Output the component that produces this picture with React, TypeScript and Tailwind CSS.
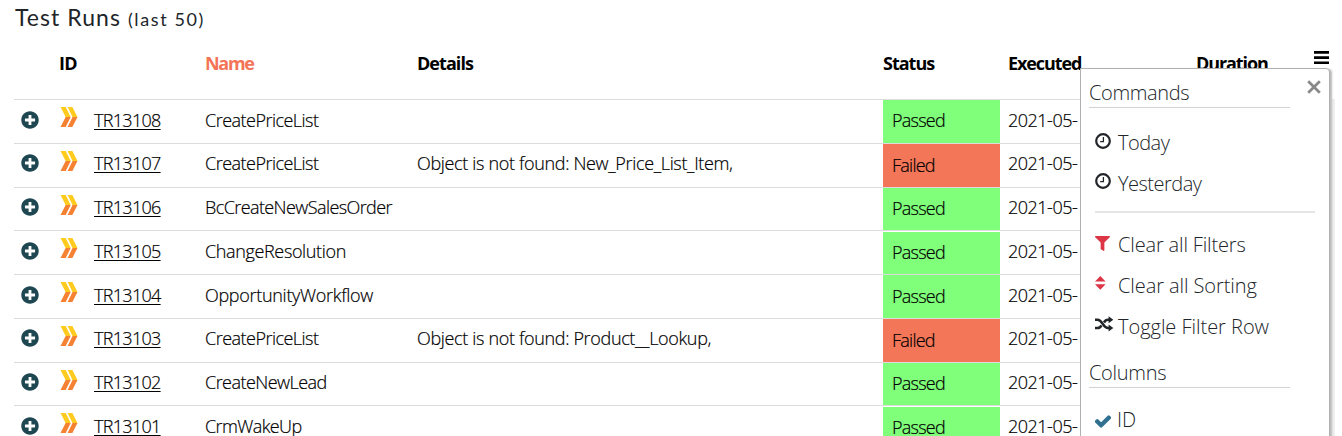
import { FaFilter, FaCheck, FaPlusCircle } from "react-icons/fa";

type Run = {
  id: string;
  name: string;
  details?: string;
  status: "Passed" | "Failed";
  row: string;
  icon: string;
  text: string;
  cell: string;
  tracking: string;
};

const tall = { row: "h-[44px]", icon: "pt-[11px]", text: "pt-[6px]", cell: "mt-0 pt-[7px]" };
const even = { row: "h-[44px]", icon: "pt-[10px]", text: "pt-[5px]", cell: "mt-0 pt-[7px]" };
const short = { row: "h-[43px]", icon: "pt-[10px]", text: "pt-[5px]", cell: "mt-0 pt-[6px]" };
const offset = { row: "h-[44px]", icon: "pt-[11px]", text: "pt-[6px]", cell: "mt-px pt-[6px]" };

const runs: Run[] = [
  { id: "TR13108", name: "CreatePriceList", status: "Passed", tracking: "tracking-[-0.52px]", ...tall, cell: "mt-0 pt-[6px]" },
  { id: "TR13107", name: "CreatePriceList", details: "Object is not found: New_Price_List_Item,", status: "Failed", tracking: "tracking-[-0.52px]", ...even },
  { id: "TR13106", name: "BcCreateNewSalesOrder", status: "Passed", tracking: "tracking-[-0.59px]", ...short },
  { id: "TR13105", name: "ChangeResolution", status: "Passed", tracking: "tracking-[-0.36px]", ...offset },
  { id: "TR13104", name: "OpportunityWorkflow", status: "Passed", tracking: "tracking-[-0.3px]", ...tall },
  { id: "TR13103", name: "CreatePriceList", details: "Object is not found: Product__Lookup,", status: "Failed", tracking: "tracking-[-0.52px]", ...even },
  { id: "TR13102", name: "CreateNewLead", status: "Passed", tracking: "tracking-[-0.54px]", ...short },
  { id: "TR13101", name: "CrmWakeUp", status: "Passed", tracking: "tracking-[-0.6px]", ...offset },
];

const columns = "grid grid-cols-[45px_35px_111px_212px_466px_125px_1fr]";

function RunIcon() {
  return (
    <svg className="ml-[1px] mt-[7px] h-[20px] w-[18px]" viewBox="0 0 18 20">
      <path d="M.5 0h5.2l5 10H5.6zM7.6 0h4.8l5.1 10h-5z" fill="#ffcb1f" />
      <path d="M5.6 10h5.1L5.7 20H.5zM12.5 10h5L12.4 20H7.6z" fill="#f58233" />
    </svg>
  );
}

function ClockIcon() {
  return (
    <svg className="h-[16px] w-[16px]" viewBox="0 0 16 16" fill="none" stroke="#212529">
      <circle cx="8" cy="8" r="6.8" strokeWidth="2.2" />
      <path d="M8.4 4v4.7H5.2" strokeWidth="1.3" />
    </svg>
  );
}

function SortIcon() {
  return (
    <svg className="h-[14px] w-[11px]" viewBox="0 0 11 14" fill="#dc3545">
      <path d="M5.3 0L10.6 5.6H0zM0 8.2h10.6L5.3 13.8z" />
    </svg>
  );
}

function ShuffleIcon() {
  return (
    <svg className="h-[16px] w-[19px]" viewBox="0 0 19 16" fill="none" stroke="#212529" strokeWidth="2.5">
      <path d="M0 3.8h2.5C8 3.8 7.500 12 13 12h2" />
      <path d="M0 12h2.500c1.900 0 3.100-1 4-2.700M9 6.500c1-1.700 2.200-2.700 4-2.700h2" />
      <path d="M13.6.3l4.700 3.500-4.700 3.500zM13.6 8.500l4.700 3.500-4.700 3.500z" fill="#212529" stroke="none" />
    </svg>
  );
}

function Commands() {
  return (
    <div className="absolute left-[1080px] top-[68px] h-[380px] w-[250px] rounded-tr-[4px] border border-[#b0b0b0] bg-white text-[20px] font-light leading-[28px] text-[#212529] shadow-[2px_1px_2px_#bbb]">
      <svg className="absolute left-[226px] top-[11px] h-[14px] w-[14px]" viewBox="0 0 14 14">
        <path d="M1.2 1.2l11.6 11.6M12.8 1.2L1.2 12.8" stroke="#888" strokeWidth="2.7" />
      </svg>
      <div className="ml-[8px] mt-[10px] h-[29px] w-[201px] border-b border-[#d3d3d3] tracking-[-0.35px]">Commands</div>
      <div className="mt-[21px] flex h-[41px] pl-[14px]">
        <span className="mt-[4px] w-[23px]"><ClockIcon /></span>
        <span className="tracking-[-0.5px]">Today</span>
      </div>
      <div className="flex h-[41px] pl-[14px]">
        <span className="mt-[3px] w-[23px]"><ClockIcon /></span>
        <span className="tracking-[-0.5px]">Yesterday</span>
      </div>
      <div className="ml-[14px] h-[2px] w-[220px] bg-[#e5e5e5]" />
      <div className="mt-[18px] flex h-[41px] pl-[14px]">
        <span className="mt-[5px] w-[23px]"><FaFilter className="h-[15px] w-[15px] text-[#dc3545]" /></span>
        <span className="tracking-[-0.15px]">Clear all Filters</span>
      </div>
      <div className="flex h-[41px] pl-[14px]">
        <span className="mt-[4px] w-[23px]"><SortIcon /></span>
        <span className="tracking-[-0.08px]">Clear all Sorting</span>
      </div>
      <div className="flex h-[40px] pl-[14px]">
        <span className="mt-[3px] w-[23px]"><ShuffleIcon /></span>
        <span className="tracking-[-0.03px]">Toggle Filter Row</span>
      </div>
      <div className="ml-[8px] mt-[6px] h-[29px] w-[201px] border-b border-[#d3d3d3] tracking-[-0.3px]">Columns</div>
      <div className="mt-[18px] flex pl-[14px]">
        <span className="mt-[8px] w-[22px]"><FaCheck className="h-[15px] w-[16px] stroke-[#2f6f8f] stroke-[45px] text-[#2f6f8f]" /></span>
        <span>ID</span>
      </div>
    </div>
  );
}

export default function App() {
  return (
    <main className="relative h-[436px] w-[1342px] overflow-hidden bg-white font-['Open_Sans','Noto_Sans',sans-serif] text-[18px] leading-[28px] text-black">
      <h1 className="h-[45px] pl-[15px] pt-[3px] font-['Lato',sans-serif] text-[23px] tracking-[1.05px] text-[#212529]">
        Test Runs <small className="text-[18px] tracking-[1.6px]">(last 50)</small>
      </h1>
      <section className="ml-[14px] w-[1321px]">
        <div className={`${columns} h-[54px] pt-[4px] font-bold tracking-[-0.7px]`}>
          <span className="col-span-2 pl-[45px]">ID</span>
          <span />
          <span className="text-[#f47458] tracking-[-1.3px]">Name</span>
          <span className="tracking-[-0.95px]">Details</span>
          <span className="tracking-[-1px]">Status</span>
          <span className="flex">
            <span className="w-[188px] tracking-[-1.1px]">Executed</span>
            <span className="w-[118px] tracking-[-1.1px]">Duration</span>
            <svg className="mt-px h-[15px] w-[15px]" viewBox="0 0 15 15">
              <path d="M0 2.4h15M0 7.6h15M0 12.7h15" stroke="#000" strokeWidth="2.6" />
            </svg>
          </span>
        </div>
        <div className="border-r-[5px] border-[#efefef] [-webkit-text-stroke:0.2px]">
          {runs.map((r) => (
            <div key={r.id} className={`${columns} ${r.row} border-t border-[#dcdcdc] font-light`}>
              <span className={r.icon}><FaPlusCircle className="ml-[7px] h-[18px] w-[18px] text-[#1f4752]" /></span>
              <RunIcon />
              <span className={r.text}><a className="underline decoration-1 underline-offset-2 tracking-[-0.7px]">{r.id}</a></span>
              <span className={`${r.text} ${r.tracking}`}>{r.name}</span>
              <span className={`${r.text} tracking-[-0.34px]`}>{r.details}</span>
              <span className={`${r.cell} w-[117px] pl-[9px] tracking-[-0.75px] ${r.status === "Passed" ? "bg-[#80ff7b]" : "bg-[#f47659]"}`}>{r.status}</span>
              <span className={`${r.text} tracking-[-0.5px]`}>2021-05-</span>
            </div>
          ))}
        </div>
      </section>
      <Commands />
    </main>
  );
}
